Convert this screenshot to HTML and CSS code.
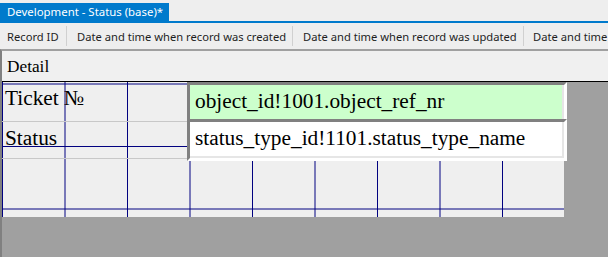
FILE: index.html
```html
<!DOCTYPE html>
<html lang="en">
<head>
  <meta charset="UTF-8">
  <title>Development - Status (base)*</title>
  <link rel="stylesheet" href="styles.css">
</head>
<body>
  <div class="tabbar">
    <div class="tab">Development - Status (base)*</div>
  </div>
  <div class="toolbar">
    <div class="col c1">Record ID</div>
    <span class="sep"></span>
    <div class="col c2">Date and time when record was created</div>
    <span class="sep"></span>
    <div class="col c3">Date and time when record was updated</div>
    <span class="sep"></span>
    <div class="col c4">Date and time</div>
  </div>
  <div class="designer">
    <div class="section">Detail</div>
    <div class="form">
      <div class="labels">
        <div class="lbl l1">Ticket №</div>
        <div class="lbl l2">Status</div>
      </div>
      <div class="fields">
        <div class="field f1">object_id!1001.object_ref_nr</div>
        <div class="field f2">status_type_id!1101.status_type_name</div>
      </div>
    </div>
  </div>
</body>
</html>
```

FILE: styles.css
```css
body { margin: 0; width: 608px; height: 257px; overflow: hidden; background: #eeeeee; font-family: "Noto Sans", "Open Sans", sans-serif; }

.tabbar { height: 18px; padding-top: 3px; border-bottom: 2px solid #007acc; display: flex; }
.tab { background: #007acc; color: #fff; font-size: 11.4px; line-height: 18px; padding: 0 6px 0 7px; white-space: nowrap; }

.toolbar { height: 26px; display: flex; align-items: center; font-size: 11.2px; color: #1e1e1e; white-space: nowrap; overflow: hidden; }
.col { flex: none; }
.c1 { width: 59px; padding-left: 7px; }
.c2 { width: 215px; padding-left: 10px; }
.c3 { width: 220px; padding-left: 10px; }
.c4 { padding-left: 9px; }
.sep { flex: none; width: 1px; height: 20px; background: #d0d0d0; }

.designer { height: 206px; border-top: 2px solid #a0a0a0; border-left: 2px solid #808080; background: #a0a0a0; }
.section { height: 28px; padding: 2px 0 0 5px; border-bottom: 1px solid #000; background: #f0f0f0; font-family: "Liberation Serif", "Times New Roman", serif; font-size: 17.3px; line-height: 28px; color: #000; }

.form { width: 562px; height: 135px; display: flex; align-items: flex-start; background-color: #efefef;
  background-image: linear-gradient(to right, transparent 61.5px, #000080 61.5px 62.5px), linear-gradient(to bottom, transparent 61.5px, #000080 61.5px 62.5px);
  background-size: 62.5px 100%, 100% 62.5px;
  background-position: 1px 0, 0 2.5px; }

.labels { width: 185px; flex: none; }
.lbl { font-family: "Liberation Serif", "Times New Roman", serif; font-size: 21.33px; line-height: 24px; padding: 4px 0 0 3px; border-bottom: 1px solid #c8c8c8; color: #000; white-space: nowrap; box-sizing: border-box; }
.l1 { height: 40px; }
.l2 { height: 37px; }

.fields { width: 380px; flex: none; }
.field { box-sizing: border-box; font-family: "Liberation Serif", "Times New Roman", serif; font-size: 21.33px; line-height: 24px; padding: 4px 0 0 5px; color: #000; white-space: nowrap; overflow: hidden;
  border: 3px solid; border-color: #808080 #fff #fff #808080; box-shadow: inset -2px -2px 0 #e6e6e6; }
.f1 { height: 37px; background: #ccffcc; border-bottom-width: 0; box-shadow: inset -2px 0 0 #e6e6e6; }
.f2 { height: 42px; background: #fff; }
```
